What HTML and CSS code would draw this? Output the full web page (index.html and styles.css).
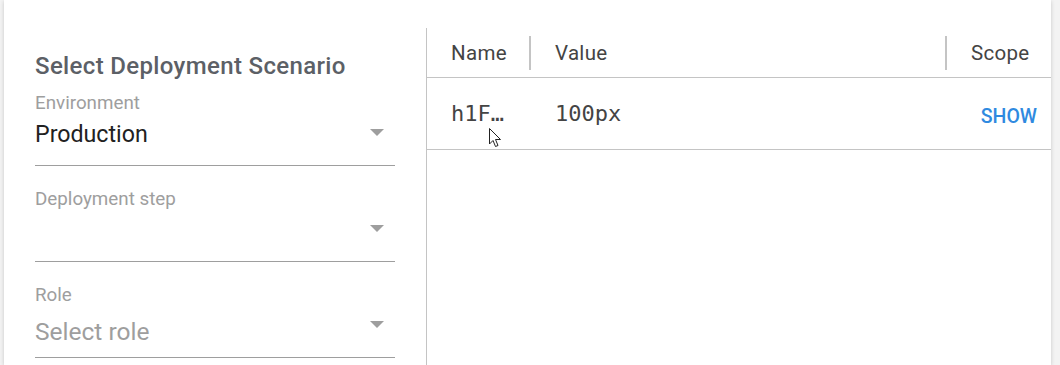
FILE: index.html
```html
<!DOCTYPE html>
<html lang="en">
<head>
  <meta charset="UTF-8">
  <title>Deployment Scenario</title>
  <link rel="stylesheet" href="styles.css">
</head>
<body>
  <div class="tarjeta">
    <div class="escenario">
      <h2>Select Deployment Scenario</h2>

      <div class="campo">
        <label>Environment</label>
        <div class="selector">
          <span class="valor">Production</span>
          <svg class="flecha" width="14" height="7" viewBox="0 0 14 7"><polygon points="0,0 14,0 7,7" fill="#9e9e9e"/></svg>
        </div>
      </div>

      <div class="campo">
        <label>Deployment step</label>
        <div class="selector">
          <span class="valor"></span>
          <svg class="flecha" width="14" height="7" viewBox="0 0 14 7"><polygon points="0,0 14,0 7,7" fill="#9e9e9e"/></svg>
        </div>
      </div>

      <div class="campo">
        <label>Role</label>
        <div class="selector">
          <span class="valor vacio">Select role</span>
          <svg class="flecha" width="14" height="7" viewBox="0 0 14 7"><polygon points="0,0 14,0 7,7" fill="#9e9e9e"/></svg>
        </div>
      </div>
    </div>

    <div class="variables">
      <div class="fila cabecera">
        <div class="celda nombre">Name</div>
        <div class="celda valor-col">Value</div>
        <div class="celda alcance">Scope</div>
      </div>
      <div class="fila">
        <div class="celda nombre mono" title="h1FontSize">h1F…</div>
        <div class="celda valor-col mono">100px</div>
        <div class="celda alcance"><button>Show</button></div>
      </div>
      <svg class="cursor" width="13" height="21" viewBox="0 0 13 21"><path d="M0.5 0.5 L0.5 16 L4 12.5 L6.5 18.5 L9 17.5 L6.5 11.5 L11.5 11.5 Z" fill="#fff" stroke="#222" stroke-width="1"/></svg>
    </div>
  </div>
</body>
</html>
```

FILE: styles.css
```css
body {
  margin: 0;
  background: #f3f3f3;
  font-family: Roboto, "Liberation Sans", sans-serif;
  height: 365px;
  overflow: hidden;
}

.tarjeta {
  display: flex;
  margin: 0 9px 0 4px;
  height: 365px;
  background: white;
  box-shadow: 0 1px 4px rgba(0, 0, 0, 0.18);
}

.escenario {
  width: 360px;
  padding: 53px 31px 0;
}

h2 {
  margin: 0 0 13px;
  font-size: 24px;
  line-height: 27px;
  font-weight: 500;
  letter-spacing: 0.35px;
  color: #5c6066;
}

.campo {
  margin-bottom: 23px;
}

label {
  display: block;
  font-size: 18.8px;
  line-height: 20px;
  color: #9e9e9e;
  margin-bottom: 8px;
}

.selector {
  display: flex;
  align-items: center;
  justify-content: space-between;
  height: 26px;
  padding-bottom: 18px;
  border-bottom: 1px solid #9e9e9e;
}

.valor {
  font-size: 23.2px;
  line-height: 26px;
  color: #212121;
}

.valor.vacio {
  font-size: 24.5px;
  color: #9e9e9e;
  margin-top: 12px;
}

.flecha {
  margin-right: 11px;
  margin-top: -4px;
}

.variables {
  flex: 1;
  position: relative;
  margin-top: 28px;
  border-left: 1px solid #c4c4c4;
}

.fila {
  display: flex;
  align-items: center;
  border-bottom: 1px solid #c4c4c4;
  height: 71px;
}

.cabecera {
  height: 49px;
}

.celda {
  padding: 0 24px 0 24px;
  box-sizing: border-box;
  white-space: nowrap;
}

.cabecera .celda {
  font-size: 20.5px;
  line-height: 22px;
  letter-spacing: 0.3px;
  color: #444;
}

.cabecera .nombre,
.cabecera .valor-col {
  border-right: 2px solid #c4c4c4;
  height: 34px;
  display: flex;
  align-items: center;
}

.nombre {
  width: 104px;
}

.valor-col {
  flex: 1;
}

.alcance {
  width: 104px;
  padding-right: 14px;
  text-align: right;
}

.cabecera .alcance {
  text-align: left;
}

.mono {
  font-family: "DejaVu Sans Mono", monospace;
  font-size: 22px;
  line-height: 26px;
  color: #444;
  margin-top: 1px;
}

button {
  background: none;
  border: none;
  padding: 0;
  font-family: Roboto, sans-serif;
  font-size: 19.5px;
  font-weight: 500;
  text-transform: uppercase;
  color: #2f8ae0;
  cursor: pointer;
  margin-top: 6px;
}

.cursor {
  position: absolute;
  left: 62px;
  top: 100px;
}
```
